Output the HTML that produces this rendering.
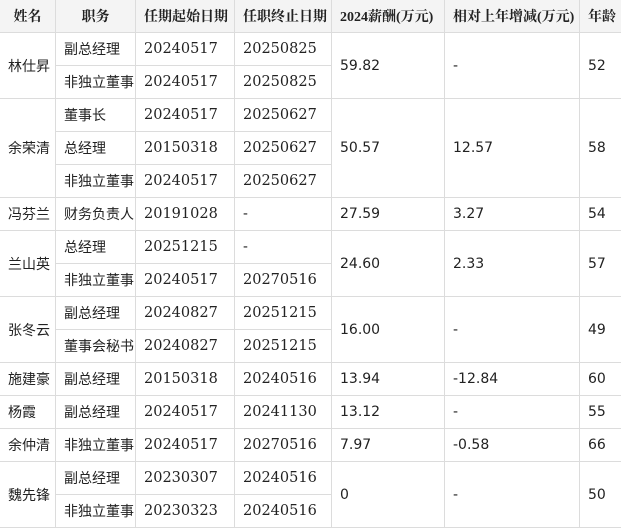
<!DOCTYPE html>
<html><head><meta charset="utf-8"><style>
html,body{margin:0;padding:0;background:#fff;}
table{border-collapse:collapse;table-layout:fixed;width:622px;position:absolute;left:-1px;top:-1px;}
td,th{border:1px solid #dcdcdc;height:32px;padding:0 0 0 8px;text-align:left;font-size:14px;color:#222;white-space:nowrap;overflow:hidden;}
th{background:#f4f4f4;font-family:"Liberation Serif","Noto Serif CJK SC",serif;font-weight:bold;font-size:14px;}
td{font-family:"DejaVu Sans","Noto Sans CJK SC",sans-serif;}
td.d{font-family:"DejaVu Serif","Noto Serif CJK SC",serif;font-size:14.5px;}
th.c{text-align:center;padding:0;}
</style></head><body>
<table>
<colgroup><col style="width:56px"><col style="width:80px"><col style="width:99px"><col style="width:97px"><col style="width:113px"><col style="width:135px"><col style="width:42px"></colgroup>
<tr><th class="c">姓名</th><th class="c">职务</th><th>任期起始日期</th><th>任职终止日期</th><th>2024薪酬(万元)</th><th>相对上年增减(万元)</th><th>年龄</th></tr>
<tr><td rowspan="2">林仕昇</td><td>副总经理</td><td class="d">20240517</td><td class="d">20250825</td><td rowspan="2">59.82</td><td rowspan="2">-</td><td rowspan="2">52</td></tr>
<tr><td>非独立董事</td><td class="d">20240517</td><td class="d">20250825</td></tr>
<tr><td rowspan="3">余荣清</td><td>董事长</td><td class="d">20240517</td><td class="d">20250627</td><td rowspan="3">50.57</td><td rowspan="3">12.57</td><td rowspan="3">58</td></tr>
<tr><td>总经理</td><td class="d">20150318</td><td class="d">20250627</td></tr>
<tr><td>非独立董事</td><td class="d">20240517</td><td class="d">20250627</td></tr>
<tr><td>冯芬兰</td><td>财务负责人</td><td class="d">20191028</td><td class="d">-</td><td>27.59</td><td>3.27</td><td>54</td></tr>
<tr><td rowspan="2">兰山英</td><td>总经理</td><td class="d">20251215</td><td class="d">-</td><td rowspan="2">24.60</td><td rowspan="2">2.33</td><td rowspan="2">57</td></tr>
<tr><td>非独立董事</td><td class="d">20240517</td><td class="d">20270516</td></tr>
<tr><td rowspan="2">张冬云</td><td>副总经理</td><td class="d">20240827</td><td class="d">20251215</td><td rowspan="2">16.00</td><td rowspan="2">-</td><td rowspan="2">49</td></tr>
<tr><td>董事会秘书</td><td class="d">20240827</td><td class="d">20251215</td></tr>
<tr><td>施建豪</td><td>副总经理</td><td class="d">20150318</td><td class="d">20240516</td><td>13.94</td><td>-12.84</td><td>60</td></tr>
<tr><td>杨霞</td><td>副总经理</td><td class="d">20240517</td><td class="d">20241130</td><td>13.12</td><td>-</td><td>55</td></tr>
<tr><td>余仲清</td><td>非独立董事</td><td class="d">20240517</td><td class="d">20270516</td><td>7.97</td><td>-0.58</td><td>66</td></tr>
<tr><td rowspan="2">魏先锋</td><td>副总经理</td><td class="d">20230307</td><td class="d">20240516</td><td rowspan="2">0</td><td rowspan="2">-</td><td rowspan="2">50</td></tr>
<tr><td>非独立董事</td><td class="d">20230323</td><td class="d">20240516</td></tr>
</table>
</body></html>
